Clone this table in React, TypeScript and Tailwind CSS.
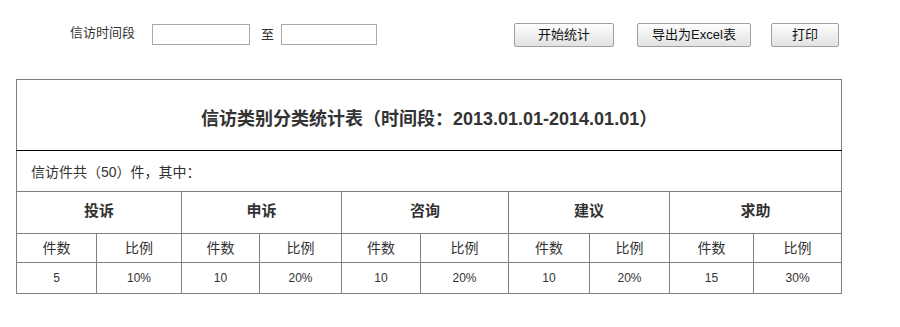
import React from 'react';

const categories = [
  { name: '投诉', count: 5, ratio: '10%', widths: ['w-[80px]', 'w-[85px]'] },
  { name: '申诉', count: 10, ratio: '20%', widths: ['w-[78px]', 'w-[82px]'] },
  { name: '咨询', count: 10, ratio: '20%', widths: ['w-[79px]', 'w-[88px]'] },
  { name: '建议', count: 10, ratio: '20%', widths: ['w-[81px]', 'w-[80px]'] },
  { name: '求助', count: 15, ratio: '30%', widths: ['w-[84px]', 'w-[88px]'] },
];

const cell = 'border border-[#808080] text-center';

function ToolButton({ label, width }: { label: string; width: string }) {
  return (
    <button
      className={`${width} h-[24px] rounded-[2px] border border-[#a0a0a0] bg-gradient-to-b from-[#fdfdfd] to-[#e2e2e2] text-[13px] text-[#111] leading-none`}
    >
      {label}
    </button>
  );
}

export default function App() {
  return (
    <div
      className="w-[900px] h-[327px] bg-white text-[#333] text-[12px]"
      style={{ fontFamily: '"Liberation Sans", "Noto Sans CJK SC", sans-serif' }}
    >
      {/* query bar */}
      <div className="flex items-center h-[68px] pt-[1px]">
        <span className="ml-[70px] w-[82px] text-[13px] whitespace-nowrap -mt-[4px]">信访时间段</span>
        <input className="w-[98px] h-[21px] border border-[#a9a9a9] outline-none" />
        <span className="ml-[11px] w-[20px] text-[13px]">至</span>
        <input className="w-[96px] h-[21px] border border-[#a9a9a9] outline-none" />
        <div className="ml-[137px] flex gap-[23px]">
          <ToolButton label="开始统计" width="w-[100px]" />
          <ToolButton label="导出为Excel表" width="w-[114px]" />
        </div>
        <div className="ml-[20px]">
          <ToolButton label="打印" width="w-[68px]" />
        </div>
      </div>

      {/* statistics table */}
      <div className="ml-[16px] mt-[11px] w-[826px]">
        <table className="w-[826px] border-collapse table-fixed">
          <colgroup>
            {categories.flatMap((c) =>
              c.widths.map((w, i) => <col key={c.name + i} className={w} />)
            )}
          </colgroup>
          <tbody>
            <tr className="h-[71px]">
              <td
                colSpan={10}
                className="border border-[#808080] border-b-black text-center text-[18px] font-bold text-[#333] pt-[8px]"
              >
                信访类别分类统计表（时间段：2013.01.01-2014.01.01）
              </td>
            </tr>
            <tr className="h-[41px]">
              <td colSpan={10} className="border border-[#808080] border-t-black pl-[14px] text-[14px] pt-[2px]">
                信访件共（50）件，其中：
              </td>
            </tr>
            <tr className="h-[42px]">
              {categories.map((c) => (
                <td key={c.name} colSpan={2} className={`${cell} text-[15px] font-bold pb-[2px]`}>
                  {c.name}
                </td>
              ))}
            </tr>
            <tr className="h-[29px]">
              {categories.map((c) => (
                <React.Fragment key={c.name}>
                  <td className={`${cell} text-[14px]`}>件数</td>
                  <td className={`${cell} text-[14px]`}>比例</td>
                </React.Fragment>
              ))}
            </tr>
            <tr className="h-[31px]">
              {categories.map((c) => (
                <React.Fragment key={c.name}>
                  <td className={cell}>{c.count}</td>
                  <td className={cell}>{c.ratio}</td>
                </React.Fragment>
              ))}
            </tr>
          </tbody>
        </table>
      </div>
    </div>
  );
}
